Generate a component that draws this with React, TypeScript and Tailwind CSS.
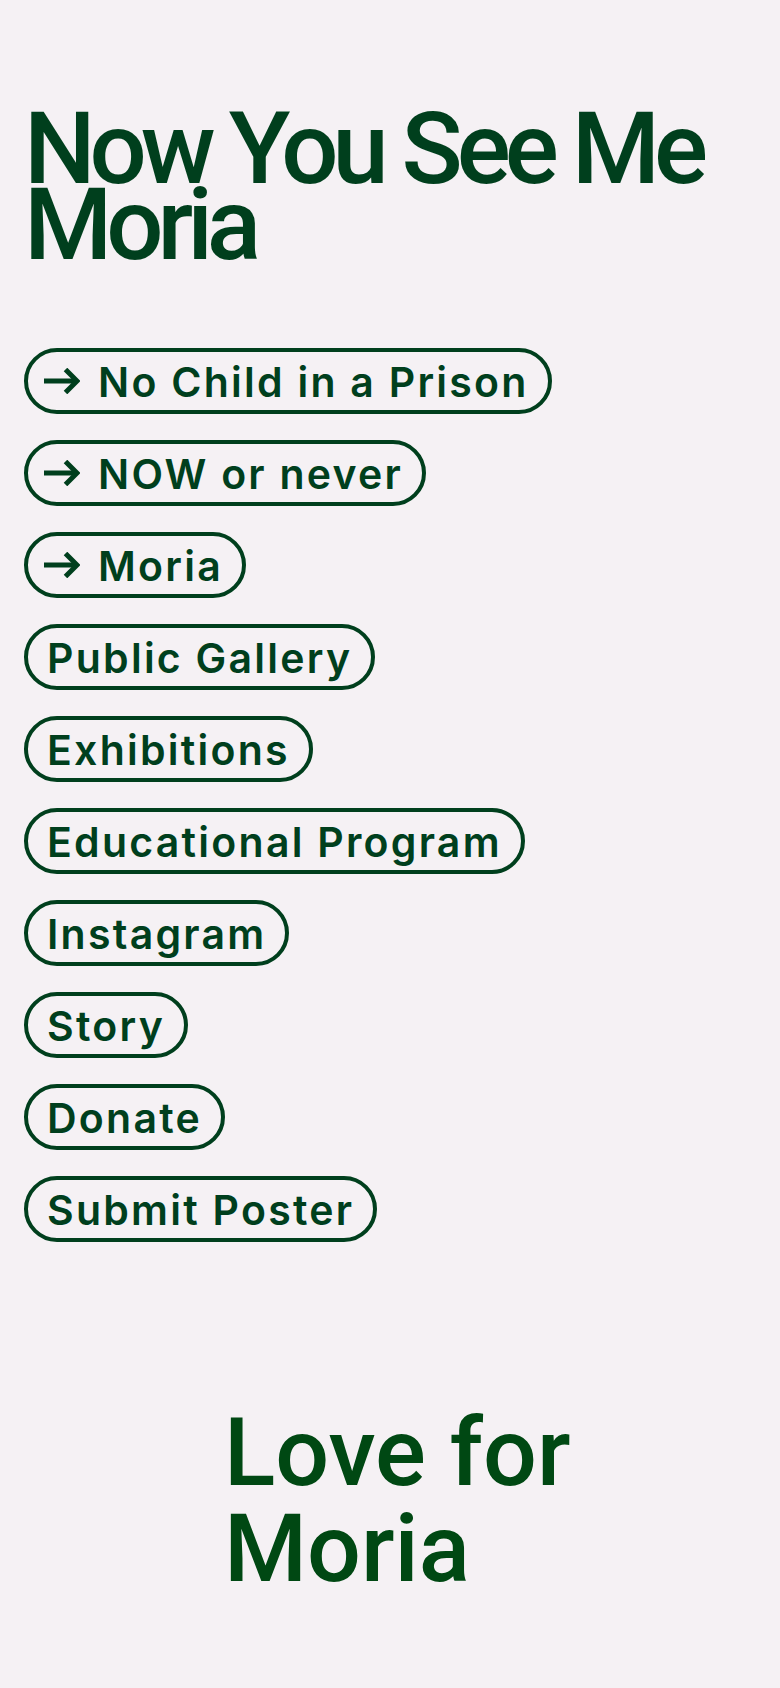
import React from "react";

const Arrow = () => (
  <svg width="36" height="26" viewBox="0 0 36 26" fill="none" className="shrink-0">
    <path d="M0 13 H33" stroke="currentColor" strokeWidth="5" strokeLinecap="butt" />
    <path d="M21.5 1.5 L33 13 L21.5 24.5" stroke="currentColor" strokeWidth="5" strokeLinecap="butt" strokeLinejoin="miter" />
  </svg>
);

const links: { label: string; arrow?: boolean }[] = [
  { label: "No Child in a Prison", arrow: true },
  { label: "NOW or never", arrow: true },
  { label: "Moria", arrow: true },
  { label: "Public Gallery" },
  { label: "Exhibitions" },
  { label: "Educational Program" },
  { label: "Instagram" },
  { label: "Story" },
  { label: "Donate" },
  { label: "Submit Poster" },
];

export default function App() {
  return (
    <div className="min-h-screen w-full bg-[#f5f1f4] text-[#003f1d] px-6 pt-[111px] pb-[91px]">
      <h1
        className="text-[101px] leading-[76px] font-medium tracking-[-0.06em] whitespace-nowrap"
        style={{ fontFamily: 'Roboto, "Liberation Sans", Arial, sans-serif' }}
      >
        Now You See Me
        <br />
        Moria
      </h1>

      <nav className="mt-[85px] flex flex-col items-start gap-[26px]">
        {links.map((l) => (
          <a
            key={l.label}
            href="#"
            className={
              "inline-flex items-center h-[66px] rounded-full border-4 border-[#003f1d] pr-[19px] " +
              (l.arrow ? "pl-[16px] gap-[18px]" : "pl-[19px]")
            }
          >
            {l.arrow && <Arrow />}
            <span
              className="text-[41px] leading-none font-semibold tracking-[0.055em] whitespace-nowrap pt-[2px]"
              style={{ fontFamily: 'Inter, "Noto Sans", sans-serif' }}
            >
              {l.label}
            </span>
          </a>
        ))}
      </nav>

      <div
        className="mt-[163px] pl-[200px] text-[95px] leading-[96px] font-medium text-[#004813]"
        style={{ fontFamily: 'Roboto, "Liberation Sans", Arial, sans-serif' }}
      >
        Love for
        <br />
        Moria
      </div>
    </div>
  );
}
